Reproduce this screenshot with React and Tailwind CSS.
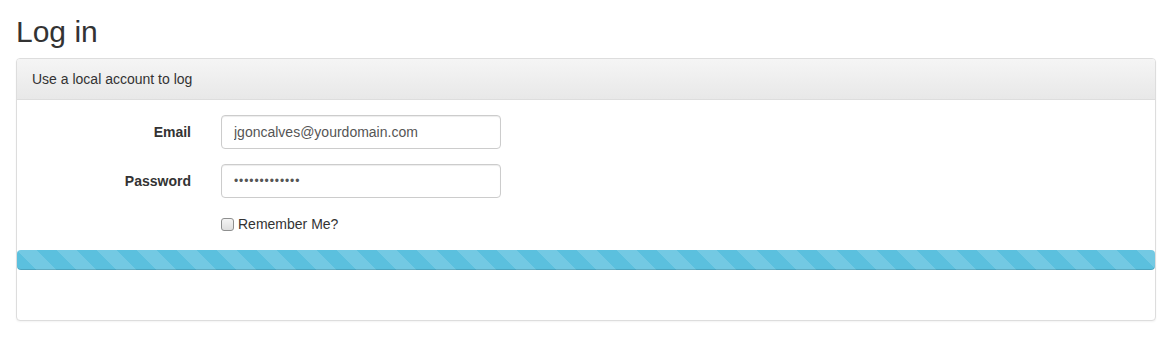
export default function App() {
  return (
    <div className="min-h-screen bg-white pl-4 pt-[15px] font-['Liberation_Sans',Arial,sans-serif] text-[14px] leading-[20px] text-[#333]">
      <h2 className="mb-[10px] text-[30px] font-medium leading-[33px] text-[#333]">Log in</h2>

      {/* Panel */}
      <div className="w-[1140px] rounded-[4px] border border-[#ddd] bg-white shadow-[0_1px_2px_rgba(0,0,0,0.05)]">
        <div className="rounded-t-[3px] border-b border-[#ddd] bg-[linear-gradient(to_bottom,#f5f5f5_0%,#e8e8e8_100%)] px-[15px] py-[10px] text-[#333]">
          Use a local account to log
        </div>

        <div className="pt-[15px]">
          {/* Email */}
          <div className="mb-[15px] flex items-start">
            <label className="w-[174px] pt-[7px] text-right font-bold">Email</label>
            <input
              type="text"
              readOnly
              value="jgoncalves@yourdomain.com"
              className="ml-[30px] h-[34px] w-[280px] rounded-[4px] border border-[#ccc] bg-white px-[12px] py-[6px] text-[14px] text-[#555] shadow-[inset_0_1px_1px_rgba(0,0,0,0.075)] outline-none"
            />
          </div>

          {/* Password */}
          <div className="mb-[15px] flex items-start">
            <label className="w-[174px] pt-[7px] text-right font-bold">Password</label>
            <input
              type="password"
              readOnly
              value="Password123!!"
              className="ml-[30px] h-[34px] w-[280px] rounded-[4px] border border-[#ccc] bg-white px-[12px] py-[6px] text-[12px] tracking-[0.9px] text-[#555] shadow-[inset_0_1px_1px_rgba(0,0,0,0.075)] outline-none"
            />
          </div>

          {/* Remember me */}
          <div className="mb-[16px] flex items-center pl-[204px] pt-px">
            <span className="h-[13px] w-[13px] rounded-[3px] border border-[#8e8f8f] bg-[linear-gradient(to_bottom,#f4f4f4,#dedede)]" />
            <span className="ml-[4px] text-[#333]">Remember Me?</span>
          </div>

          {/* Progress */}
          <div className="h-[20px] rounded-[4px] bg-[#5bc0de] bg-[linear-gradient(45deg,rgba(255,255,255,.15)_25%,transparent_25%,transparent_50%,rgba(255,255,255,.15)_50%,rgba(255,255,255,.15)_75%,transparent_75%,transparent)] [background-size:40px_40px] shadow-[inset_0_-1px_0_rgba(0,0,0,0.15)]" />

          <div className="h-[50px]" />
        </div>
      </div>
    </div>
  );
}
